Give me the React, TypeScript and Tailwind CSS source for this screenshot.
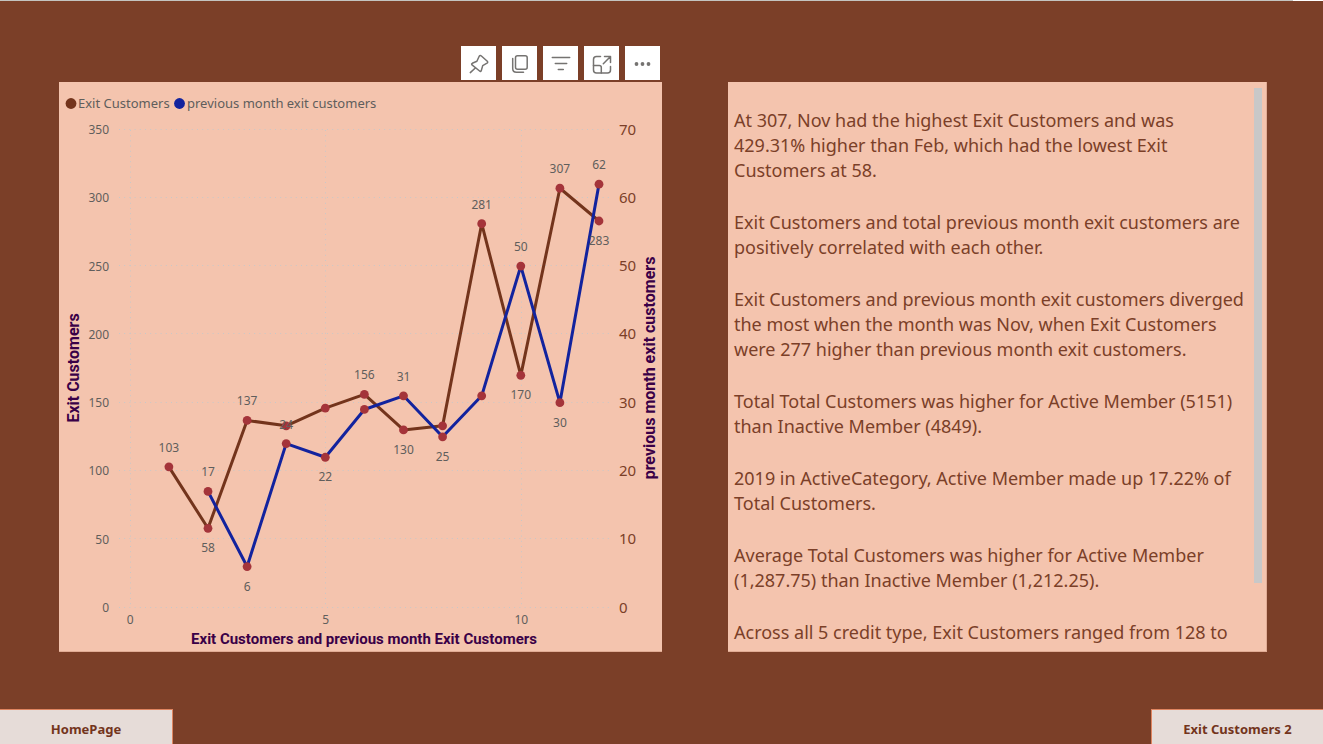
import React from "react";

type Point = { month: number; value: number };
type Side = "up" | "down";

const EXIT_CUSTOMERS: Point[] = [103, 58, 137, 133, 146, 156, 130, 133, 281, 170, 307, 283].map(
  (value, i) => ({ month: i + 1, value })
);
const PREVIOUS_MONTH: Point[] = [17, 6, 24, 22, 29, 31, 25, 31, 50, 30, 62].map((value, i) => ({
  month: i + 2,
  value,
}));

const BASE = 525.5;
const xOf = (month: number) => 70.8 + month * 39.1;
const yLeft = (value: number) => BASE - (value * 478) / 350;
const yRight = (value: number) => BASE - (value * 478) / 70;

const LEFT_TICKS = [0, 50, 100, 150, 200, 250, 300, 350];
const RIGHT_TICKS = [0, 10, 20, 30, 40, 50, 60, 70];

// Months whose label is drawn, with the side of the marker it sits on.
const EXIT_LABELS: Record<number, Side> = {
  1: "up", 2: "down", 3: "up", 6: "up", 7: "down", 9: "up", 10: "down", 11: "up", 12: "down",
};
const PREVIOUS_LABELS: Record<number, Side> = {
  2: "up", 3: "down", 4: "up", 5: "down", 7: "up", 8: "down", 10: "up", 11: "down", 12: "up",
};

function linePoints(data: Point[], y: (v: number) => number) {
  return data.map((p) => `${xOf(p.month)},${y(p.value)}`).join(" ");
}

function Markers({ data, y }: { data: Point[]; y: (v: number) => number }) {
  return (
    <g fill="#a4343a">
      {data.map((p) => (
        <circle key={p.month} cx={xOf(p.month)} cy={y(p.value)} r="4.4" />
      ))}
    </g>
  );
}

function Labels({
  data,
  y,
  sides,
}: {
  data: Point[];
  y: (v: number) => number;
  sides: Record<number, Side>;
}) {
  return (
    <g className="fill-[#605e5c] text-[12px]" textAnchor="middle">
      {data
        .filter((p) => sides[p.month])
        .map((p) => (
          <text key={p.month} x={xOf(p.month)} y={y(p.value) + (sides[p.month] === "up" ? -15 : 24)}>
            {p.value}
          </text>
        ))}
    </g>
  );
}

function Chart() {
  return (
    <svg
      viewBox="0 0 603 569"
      className="block w-full"
      role="img"
      aria-label="Exit Customers and previous month exit customers by month"
    >
      <circle cx="12" cy="21.5" r="5.4" fill="#73341c" />
      <circle cx="120.5" cy="21.5" r="5.4" fill="#12239e" />
      <g className="fill-[#605e5c] text-[13px]">
        <text x="19" y="26">Exit Customers</text>
        <text x="128" y="26">previous month exit customers</text>
      </g>

      <g stroke="#c8c8c8" strokeWidth="1" strokeDasharray="1 4.2">
        {LEFT_TICKS.map((t) => (
          <line key={t} x1="60" x2="550" y1={Math.round(yLeft(t)) - 0.5} y2={Math.round(yLeft(t)) - 0.5} />
        ))}
        {[0, 5, 10].map((t) => (
          <line key={t} x1={Math.round(xOf(t)) + 0.5} x2={Math.round(xOf(t)) + 0.5} y1="48" y2="526" />
        ))}
      </g>

      <g className="fill-[#605e5c] text-[12px]">
        <g textAnchor="end">
          {LEFT_TICKS.map((t) => (
            <text key={t} x="50" y={yLeft(t) + 4.5}>{t}</text>
          ))}
        </g>
        <g textAnchor="middle">
          {[0, 5, 10].map((t) => (
            <text key={t} x={xOf(t) + 0.5} y="542">{t}</text>
          ))}
        </g>
      </g>
      <g className="fill-[#7b3f28] text-[15px]">
        {RIGHT_TICKS.map((t) => (
          <text key={t} x="560" y={yRight(t) + 5}>{t}</text>
        ))}
      </g>

      <g fill="none" strokeWidth="3" strokeLinejoin="round">
        <polyline points={linePoints(EXIT_CUSTOMERS, yLeft)} stroke="#73341c" />
        <polyline points={linePoints(PREVIOUS_MONTH, yRight)} stroke="#12239e" />
      </g>
      <Markers data={EXIT_CUSTOMERS} y={yLeft} />
      <Markers data={PREVIOUS_MONTH} y={yRight} />
      <Labels data={EXIT_CUSTOMERS} y={yLeft} sides={EXIT_LABELS} />
      <Labels data={PREVIOUS_MONTH} y={yRight} sides={PREVIOUS_LABELS} />

      <g className="fill-[#3a0047] font-['Roboto',sans-serif] font-bold" textAnchor="middle">
        <text x="305" y="562" className="text-[15px]">
          Exit Customers and previous month Exit Customers
        </text>
        <g className="text-[16px]">
          <text transform="translate(20 286) rotate(-90)">Exit Customers</text>
          <text transform="translate(596 286) rotate(-90)">previous month exit customers</text>
        </g>
      </g>
    </svg>
  );
}

const TOOLS: { label: string; icon: React.ReactNode }[] = [
  {
    label: "Pin visual",
    icon: (
      <>
        <path d="M18.2 10.2Q19.2 9 20.4 10L26.3 15.3Q27.2 16.3 26 17.2L21.7 19.6L20.3 24.6Q19.7 26 18.6 25L11 18.9Q10.1 17.9 11.3 17.3L15.9 15.3Z" />
        <path d="M14.3 22L9.3 26.6" />
      </>
    ),
  },
  {
    label: "Copy visual",
    icon: (
      <>
        <rect x="13.5" y="9.7" width="11.7" height="13.6" rx="2" />
        <path d="M10.7 12.5V22.5Q10.7 26.3 14.5 26.3H21.5" />
      </>
    ),
  },
  { label: "Filters", icon: <path d="M9.3 11.5H26.7M12.3 17.5H23.7M15.3 23.5H20.3" /> },
  {
    label: "Focus mode",
    icon: (
      <>
        <path d="M16.5 10.5H12.5Q9.5 10.5 9.5 13.5V24Q9.5 27 12.5 27H23.5Q26.5 27 26.5 24V20.5" />
        <path d="M9.5 19.5H15.3Q17.3 19.5 17.3 21.5V27M19.3 17.7L26.5 10.5M20.5 10.5H26.5V16.5" />
      </>
    ),
  },
  {
    label: "More options",
    icon: (
      <g fill="#757371" stroke="none">
        <circle cx="11.5" cy="18" r="1.9" />
        <circle cx="17.5" cy="18" r="1.9" />
        <circle cx="23.5" cy="18" r="1.9" />
      </g>
    ),
  },
];

const INSIGHTS = [
  "At 307, Nov had the highest Exit Customers and was 429.31% higher than Feb, which had the lowest Exit Customers at 58.",
  "Exit Customers and total previous month exit customers are positively correlated with each other.",
  "Exit Customers and previous month exit customers diverged the most when the month was Nov, when Exit Customers were 277 higher than previous month exit customers.",
  "Total Total Customers was higher for Active Member (5151) than Inactive Member (4849).",
  "2019 in ActiveCategory, Active Member made up 17.22% of Total Customers.",
  "Average Total Customers was higher for Active Member (1,287.75) than Inactive Member (1,212.25).",
  "Across all 5 credit type, Exit Customers ranged from 128 to",
];

export default function App() {
  return (
    <div className="flex min-h-screen flex-col bg-[#7b3f28] font-['Noto_Sans',sans-serif]">
      <div className="flex h-px bg-white pr-[30px]">
        <div className="flex-1 bg-[#c4c4c0]" />
      </div>

      <main className="grid grid-cols-[603fr_539fr] gap-x-[66px] pt-[45px] pr-14 pb-12 pl-[59px]">
        <div className="col-start-1 flex justify-end gap-1.5 pr-0.5 pb-0.5">
          {TOOLS.map((tool) => (
            <button key={tool.label} type="button" aria-label={tool.label} className="bg-white">
              <svg
                width="35"
                height="34"
                viewBox="0 0 35 34"
                fill="none"
                stroke="#757371"
                strokeWidth="1.5"
                strokeLinecap="round"
                strokeLinejoin="round"
                aria-hidden="true"
              >
                {tool.icon}
              </svg>
            </button>
          ))}
        </div>

        <section className="col-start-1 border-b border-[#e0ab94] bg-[#f4c4ae]">
          <Chart />
        </section>

        <section className="col-start-2 flex items-start justify-between border-r border-b border-[#e0ab94] bg-[#f4c4ae] pt-1.5 pr-1 pl-1.5 text-[#7b3f28]">
          <div className="flex flex-1 flex-col gap-[27px] pt-5 pr-2 text-[18px] leading-[25px]">
            {INSIGHTS.map((text) => (
              <p key={text}>{text}</p>
            ))}
          </div>
          <div className="h-[88%] w-2 shrink-0 bg-[#c8c8c8]" />
        </section>
      </main>

      <nav className="mt-auto flex justify-between text-[13px] font-bold text-[#73341c]">
        <button
          type="button"
          className="h-[35px] w-[173px] border-t border-r border-[#e08560] bg-[#e6dcd8] pt-1.5"
        >
          HomePage
        </button>
        <button
          type="button"
          className="h-[35px] w-[172px] border-t border-l border-[#e08560] bg-[#e6dcd8] pt-1.5"
        >
          Exit Customers 2
        </button>
      </nav>
    </div>
  );
}
